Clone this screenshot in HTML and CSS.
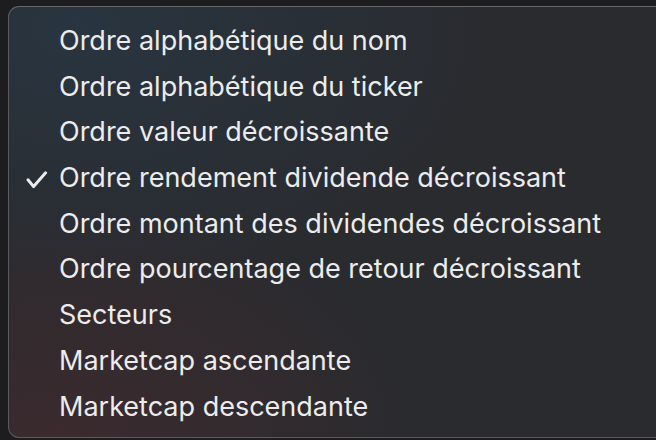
FILE: index.html
```html
<!DOCTYPE html>
<html lang="fr">
<head>
    <meta charset="UTF-8">
    <meta name="viewport" content="width=device-width, initial-scale=1.0">
    <title>Tri</title>
    <link rel="stylesheet" href="styles.css">
</head>
<body>
    <div class="menu">
        <ul class="menu-list">
            <li class="menu-item">Ordre alphabétique du nom</li>
            <li class="menu-item">Ordre alphabétique du ticker</li>
            <li class="menu-item">Ordre valeur décroissante</li>
            <li class="menu-item checked">
                <svg class="check" width="22" height="18" viewBox="0 0 22 18">
                    <path d="M2 8.8 L7.6 15.6 L19.6 1.8" fill="none" stroke="#ececed" stroke-width="3" stroke-linecap="round" stroke-linejoin="round"/>
                </svg>
                Ordre rendement dividende décroissant
            </li>
            <li class="menu-item">Ordre montant des dividendes décroissant</li>
            <li class="menu-item">Ordre pourcentage de retour décroissant</li>
            <li class="menu-item">Secteurs</li>
            <li class="menu-item">Marketcap ascendante</li>
            <li class="menu-item">Marketcap descendante</li>
        </ul>
    </div>
</body>
</html>
```

FILE: styles.css
```css
body {
    margin: 0;
    background-color: #1d1d1f;
    font-family: 'Inter', 'Noto Sans', sans-serif;
    overflow: hidden;
}
.menu {
    margin: 6px 0 0 8px;
    width: 660px;
    height: 432px;
    box-sizing: border-box;
    border: 1px solid #5a5b5e;
    border-top-color: #66676a;
    border-radius: 11px;
    background:
        radial-gradient(ellipse 420px 260px at 10% 5%, rgba(40, 56, 70, 0.75), rgba(40, 56, 70, 0) 100%),
        radial-gradient(ellipse 360px 240px at 8% 100%, rgba(62, 42, 46, 0.85), rgba(62, 42, 46, 0) 100%),
        #2a2b2f;
    padding: 11px 0 0 0;
}
.menu-list {
    list-style: none;
    margin: 0;
    padding: 0;
}
.menu-item {
    position: relative;
    height: 45.7px;
    line-height: 45.7px;
    padding-left: 50px;
    font-size: 27px;
    font-weight: 420;
    color: #ececed;
}
.check {
    position: absolute;
    left: 17px;
    top: 16px;
}
```
